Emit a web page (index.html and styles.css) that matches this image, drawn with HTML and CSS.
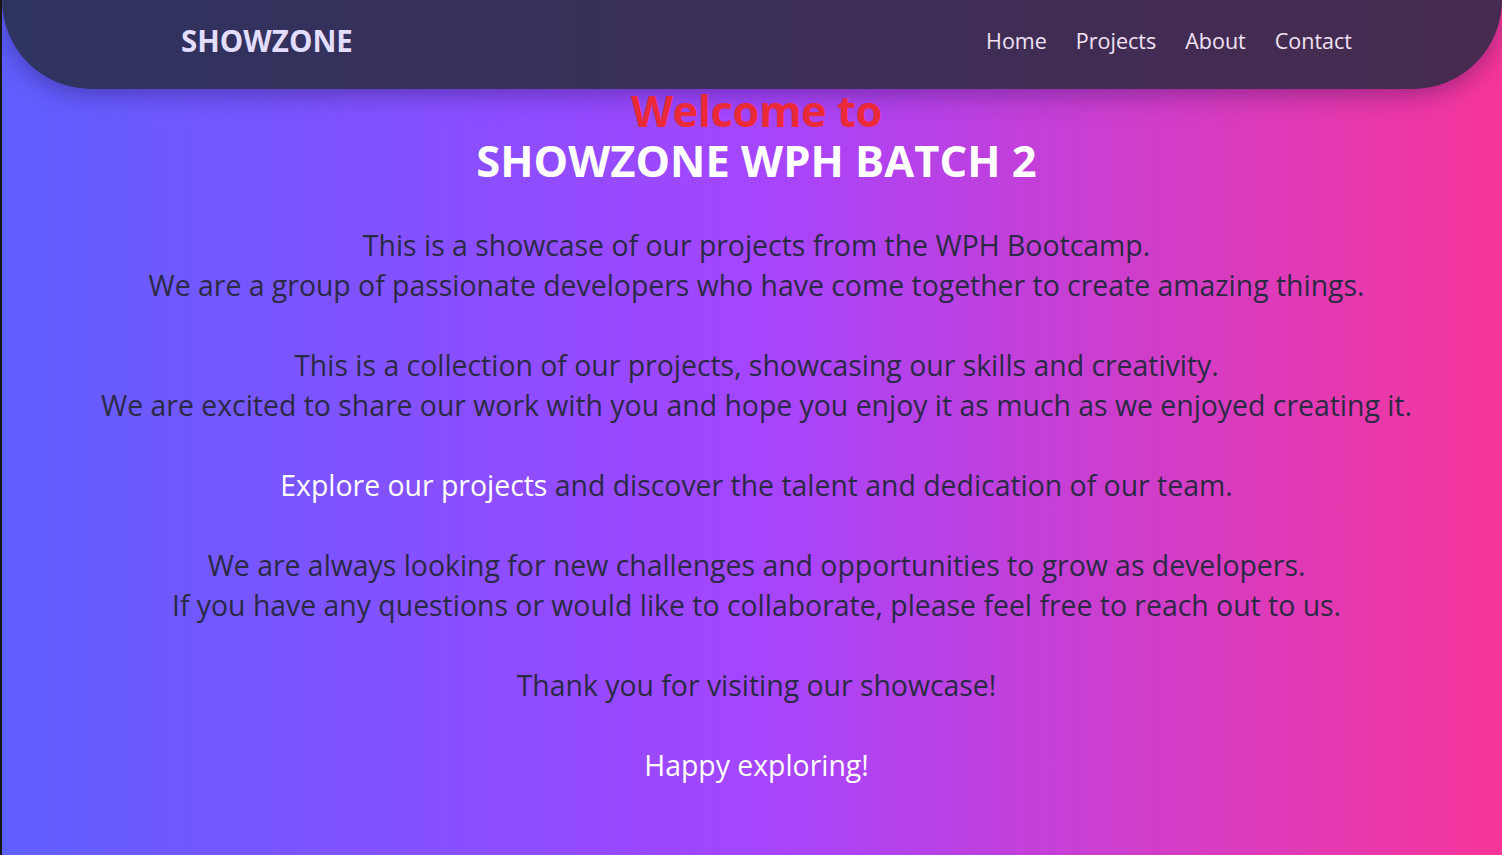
FILE: index.html
```html
<!DOCTYPE html>
<html lang="en">
<head>
  <meta charset="UTF-8">
  <meta name="viewport" content="width=device-width, initial-scale=1.0">
  <title>ShowZone</title>
  <link rel="stylesheet" href="styles.css">
</head>
<body>

  <!-- Navbar -->
  <nav class="navbar">
    <a href="#" class="logo">SHOWZONE</a>
    <ul class="nav-links">
      <li><a href="#">Home</a></li>
      <li><a href="#">Projects</a></li>
      <li><a href="#">About</a></li>
      <li><a href="#">Contact</a></li>
    </ul>
  </nav>

  <!-- Hero -->
  <main class="hero">
    <h1 class="hero-title">
      <span class="welcome">Welcome to</span>
      <span class="batch">SHOWZONE WPH BATCH 2</span>
    </h1>

    <p>This is a showcase of our projects from the WPH Bootcamp.<br>
    We are a group of passionate developers who have come together to create amazing things.</p>

    <p>This is a collection of our projects, showcasing our skills and creativity.<br>
    We are excited to share our work with you and hope you enjoy it as much as we enjoyed creating it.</p>

    <p><a href="#" class="highlight">Explore our projects</a> and discover the talent and dedication of our team.</p>

    <p>We are always looking for new challenges and opportunities to grow as developers.<br>
    If you have any questions or would like to collaborate, please feel free to reach out to us.</p>

    <p>Thank you for visiting our showcase!</p>

    <p class="highlight">Happy exploring!</p>
  </main>

</body>
</html>
```

FILE: styles.css
```css
/* Base */
* {
  box-sizing: border-box;
}

body {
  margin: 0;
  min-height: 100vh;
  font-family: 'Open Sans', 'Noto Sans', sans-serif;
  background: linear-gradient(to right, #5f5fff, #a445ff 50%, #f7359a);
  border-left: 2px solid #161616;
  color: #2b2a45;
  overflow: hidden;
}

a {
  text-decoration: none;
  color: inherit;
}

/* Navbar */
.navbar {
  height: 89px;
  display: flex;
  align-items: center;
  justify-content: space-between;
  padding: 0 150px 8px 179px;
  background: linear-gradient(to right, #2f3360, #472a4f);
  border-radius: 0 0 100px 100px;
  box-shadow: 0 6px 24px rgba(20, 10, 60, 0.35);
}

.logo {
  font-size: 29.5px;
  font-weight: 700;
  color: #e3ddff;
}

.nav-links {
  display: flex;
  gap: 29px;
  list-style: none;
  margin: 0;
  padding: 0;
}

.nav-links a {
  font-size: 21.5px;
  color: #f2e2f4;
}

/* Hero */
.hero {
  text-align: center;
  padding: 0 0 0 9px;
}

.hero-title {
  margin: -3px 0 39px;
  font-size: 43.5px;
  line-height: 50px;
  font-weight: 700;
}

.hero-title span {
  display: block;
}

.welcome {
  color: #ea2a38;
  letter-spacing: -0.5px;
}

.batch {
  color: #fff;
}

.hero p {
  margin: 0 0 40px;
  font-size: 28.4px;
  line-height: 40px;
}

.highlight {
  color: #fff;
}
```
